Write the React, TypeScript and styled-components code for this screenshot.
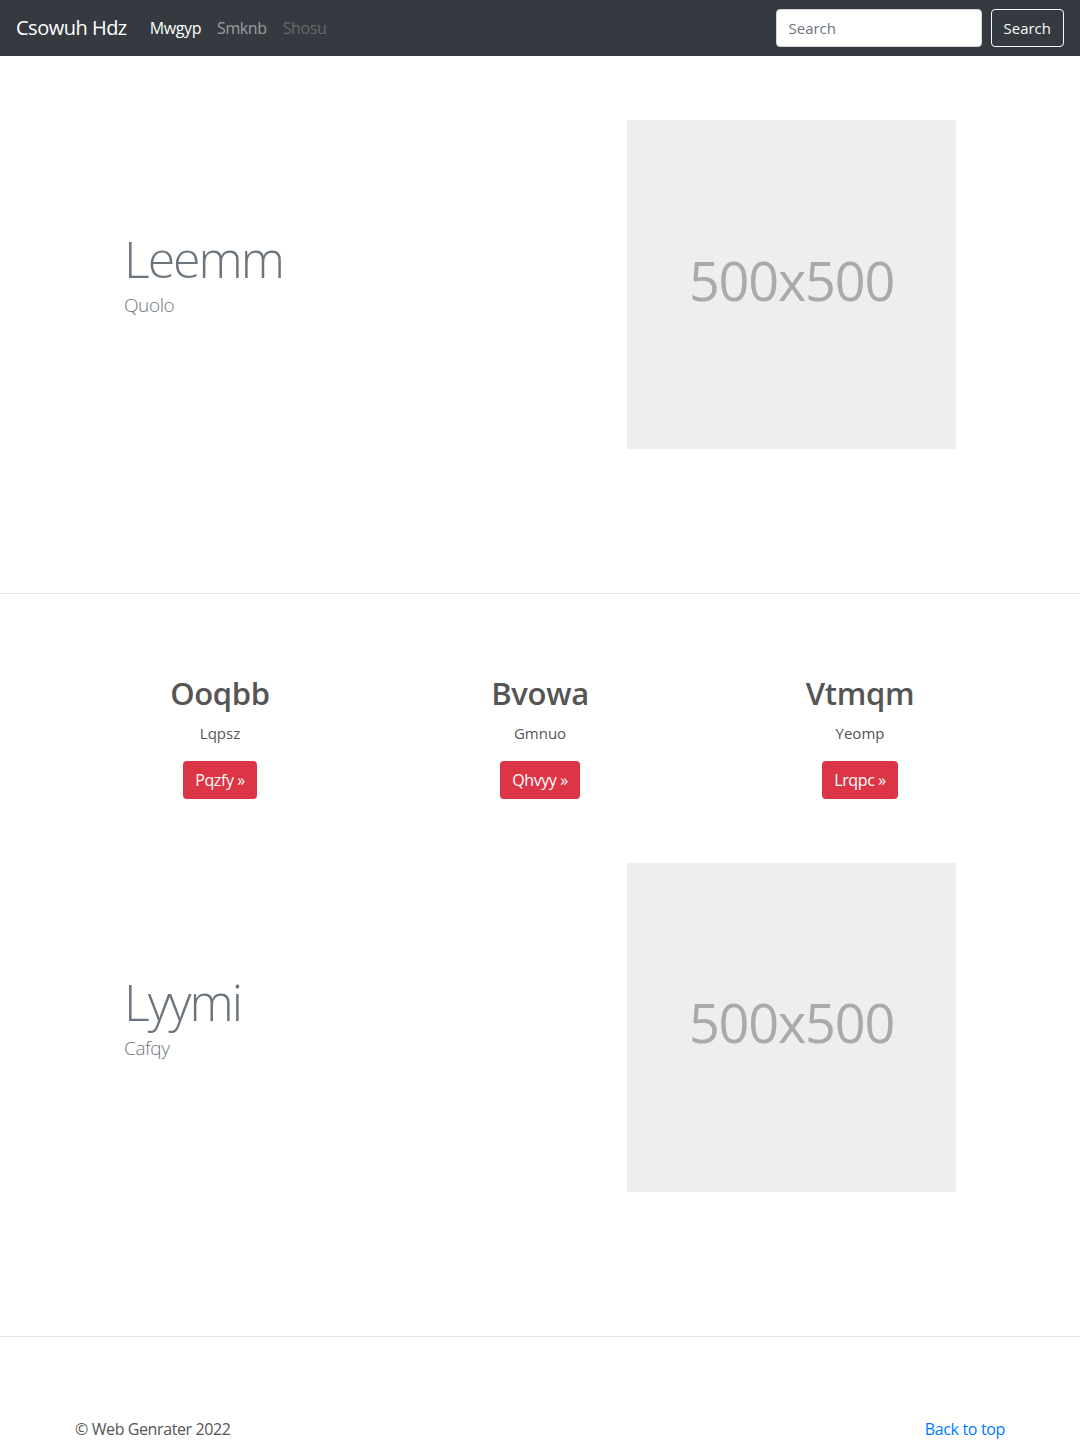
import React from "react";
import styled, { createGlobalStyle } from "styled-components";

const Global = createGlobalStyle`
  html, body { margin: 0; padding: 0; background: #fff; }
  body {
    font-family: "Open Sans", "Noto Sans", sans-serif;
    font-size: 16px;
    line-height: 1.5;
    color: #212529;
  }
  * { box-sizing: border-box; }
`;

const Nav = styled.nav`
  height: 56px;
  background: #343a40;
  display: flex;
  align-items: center;
  padding: 0 16px;
`;

const Brand = styled.a`
  color: #fff;
  font-size: 20px;
  letter-spacing: -0.5px;
  text-decoration: none;
  margin-right: 23px;
`;

const NavLinks = styled.div`
  display: flex;
  gap: 16px;
  flex: 1;
`;

const NavLink = styled.a<{ $tone: "active" | "normal" | "disabled" }>`
  font-size: 16px;
  letter-spacing: -0.4px;
  text-decoration: none;
  color: ${(p) =>
    p.$tone === "active"
      ? "#fff"
      : p.$tone === "normal"
      ? "rgba(255,255,255,0.5)"
      : "rgba(255,255,255,0.25)"};
`;

const SearchForm = styled.form`
  display: flex;
  align-items: center;
  gap: 9px;
`;

const SearchInput = styled.input`
  width: 206px;
  height: 38px;
  border: 1px solid #ced4da;
  border-radius: 4px;
  padding: 6px 12px;
  font-family: inherit;
  font-size: 15px;
  color: #495057;
  &::placeholder { color: #6c757d; }
`;

const SearchButton = styled.button`
  height: 38px;
  padding: 0 12px;
  background: transparent;
  color: #f8f9fa;
  border: 1px solid #f8f9fa;
  border-radius: 4px;
  font-family: inherit;
  font-size: 15px;
`;

const Featurette = styled.section`
  display: grid;
  grid-template-columns: 1fr 329px;
  align-items: center;
  padding: 64px 124px 144px;
`;

const FeatureText = styled.div`
  padding-bottom: 22px;
`;

const Display = styled.h2`
  margin: 0;
  font-size: 50px;
  font-weight: 300;
  line-height: 1.25;
  color: #6c757d;
  letter-spacing: -2px;
`;

const Lead = styled.p`
  margin: 1px 0 0;
  font-size: 19px;
  line-height: 1.4;
  font-weight: 300;
  color: #6c757d;
  letter-spacing: -0.4px;
`;

const Placeholder = styled.div`
  width: 329px;
  height: 329px;
  background: #eee;
  display: flex;
  align-items: center;
  justify-content: center;
  padding-bottom: 9px;
  color: #aaa;
  font-size: 54px;
  letter-spacing: -1.2px;
`;

const Divider = styled.hr`
  margin: 0;
  border: 0;
  border-top: 1px solid rgba(0, 0, 0, 0.1);
`;

const Marketing = styled.section`
  width: 960px;
  margin: 0 auto;
  display: grid;
  grid-template-columns: repeat(3, 1fr);
  padding-top: 81px;
`;

const Column = styled.div`
  display: flex;
  flex-direction: column;
  align-items: center;
  text-align: center;
`;

const ColTitle = styled.h2`
  margin: 0 0 10px;
  font-size: 31px;
  font-weight: 600;
  line-height: 1.2;
  color: #555;
  letter-spacing: -0.3px;
`;

const ColText = styled.p`
  margin: 0 0 16px;
  font-size: 15px;
  color: #555;
`;

const RedButton = styled.a`
  display: inline-flex;
  align-items: center;
  height: 38px;
  padding: 0 12px;
  background: #dc3545;
  color: #fff;
  border-radius: 4px;
  font-size: 16px;
  letter-spacing: -0.4px;
  text-decoration: none;
`;

const Footer = styled.footer`
  width: 960px;
  margin: 0 auto;
  padding: 80px 15px 30px;
  display: flex;
  justify-content: space-between;
  font-size: 16px;
`;

const Copy = styled.p`
  margin: 0;
  color: #555;
  letter-spacing: -0.4px;
`;

const TopLink = styled.a`
  color: #007bff;
  text-decoration: none;
  letter-spacing: -0.35px;
`;

const cols = [
  { title: "Ooqbb", text: "Lqpsz", btn: "Pqzfy" },
  { title: "Bvowa", text: "Gmnuo", btn: "Qhvyy" },
  { title: "Vtmqm", text: "Yeomp", btn: "Lrqpc" },
];

function Feature({ title, lead }: { title: string; lead: string }) {
  return (
    <Featurette>
      <FeatureText>
        <Display>{title}</Display>
        <Lead>{lead}</Lead>
      </FeatureText>
      <Placeholder>500x500</Placeholder>
    </Featurette>
  );
}

export default function App() {
  return (
    <>
      <Global />
      <Nav>
        <Brand href="#">Csowuh Hdz</Brand>
        <NavLinks>
          <NavLink $tone="active" href="#">Mwgyp</NavLink>
          <NavLink $tone="normal" href="#">Smknb</NavLink>
          <NavLink $tone="disabled">Shosu</NavLink>
        </NavLinks>
        <SearchForm onSubmit={(e) => e.preventDefault()}>
          <SearchInput placeholder="Search" />
          <SearchButton type="submit">Search</SearchButton>
        </SearchForm>
      </Nav>
      <Feature title="Leemm" lead="Quolo" />
      <Divider />
      <Marketing>
        {cols.map((c) => (
          <Column key={c.title}>
            <ColTitle>{c.title}</ColTitle>
            <ColText>{c.text}</ColText>
            <RedButton href="#">{c.btn} »</RedButton>
          </Column>
        ))}
      </Marketing>
      <Feature title="Lyymi" lead="Cafqy" />
      <Divider />
      <Footer>
        <Copy>© Web Genrater 2022</Copy>
        <TopLink href="#">Back to top</TopLink>
      </Footer>
    </>
  );
}
